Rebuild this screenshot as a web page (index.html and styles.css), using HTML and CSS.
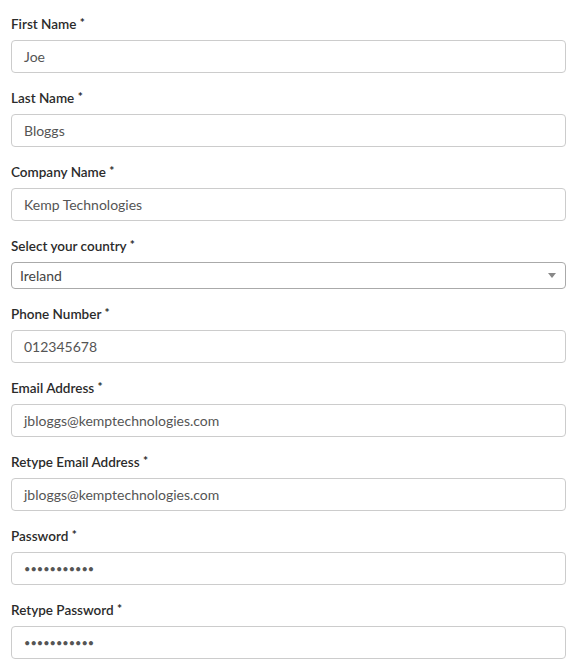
FILE: index.html
```html
<!DOCTYPE html>
<html lang="en">
<head>
<meta charset="utf-8">
<title>Register</title>
<link rel="stylesheet" href="styles.css">
</head>
<body>
<form class="form">
  <div class="field">
    <label class="label">First Name <span class="req">*</span></label>
    <div class="input">Joe</div>
  </div>
  <div class="field">
    <label class="label">Last Name <span class="req">*</span></label>
    <div class="input">Bloggs</div>
  </div>
  <div class="field">
    <label class="label">Company Name <span class="req">*</span></label>
    <div class="input">Kemp Technologies</div>
  </div>
  <div class="field">
    <label class="label">Select your country <span class="req">*</span></label>
    <div class="select"><span>Ireland</span><span class="caret"></span></div>
  </div>
  <div class="field">
    <label class="label">Phone Number <span class="req">*</span></label>
    <div class="input">012345678</div>
  </div>
  <div class="field">
    <label class="label">Email Address <span class="req">*</span></label>
    <div class="input">jbloggs@kemptechnologies.com</div>
  </div>
  <div class="field">
    <label class="label">Retype Email Address <span class="req">*</span></label>
    <div class="input">jbloggs@kemptechnologies.com</div>
  </div>
  <div class="field">
    <label class="label">Password <span class="req">*</span></label>
    <div class="input pw">•••••••••••</div>
  </div>
  <div class="field">
    <label class="label">Retype Password <span class="req">*</span></label>
    <div class="input pw">•••••••••••</div>
  </div>
</form>
</body>
</html>
```

FILE: styles.css
```css
html, body {
  margin: 0;
  padding: 0;
  background: #ffffff;
}
body {
  font-family: "Lato", "Open Sans", sans-serif;
  color: #333333;
}
.form {
  padding: 13px 12px 0 11px;
  display: flex;
  flex-direction: column;
  gap: 14px;
}
.field {
  display: flex;
  flex-direction: column;
  gap: 7px;
}
.label {
  font-size: 13.5px;
  font-weight: 600;
  line-height: 20px;
  height: 20px;
  color: #2b2b2b;
}
.req {
  font-size: 12px;
  font-weight: 700;
  vertical-align: 2px;
}
.input {
  box-sizing: border-box;
  height: 33px;
  border: 1px solid #cccccc;
  border-radius: 4px;
  padding: 0 12px;
  display: flex;
  align-items: center;
  font-size: 14px;
  color: #555555;
}
.pw {
  font-size: 11px;
  letter-spacing: 0;
  color: #555555;
}
.select {
  box-sizing: border-box;
  height: 27px;
  border: 1px solid #aaaaaa;
  border-radius: 4px;
  padding: 0 8px 0 8px;
  display: flex;
  align-items: center;
  justify-content: space-between;
  font-size: 14px;
  color: #444444;
}
.caret {
  width: 0;
  height: 0;
  border-left: 4px solid transparent;
  border-right: 4px solid transparent;
  border-top: 5px solid #888888;
  margin-right: 1px;
}
```
